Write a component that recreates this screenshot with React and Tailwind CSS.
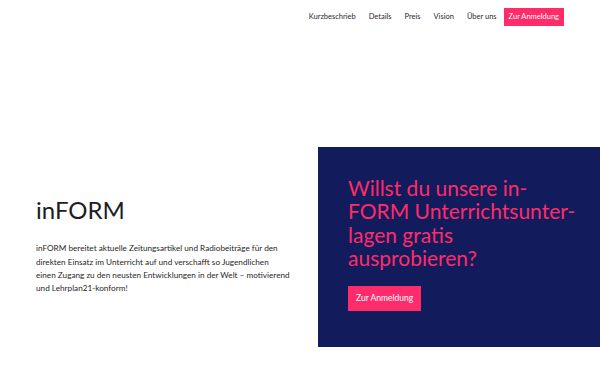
const navItems = ["Kurzbeschrieb", "Details", "Preis", "Vision", "Über uns"];

const App = () => {
  return (
    <div className="w-[600px] h-[375px] overflow-hidden bg-white font-['Lato',sans-serif] text-[#1d1d1f]">
      {/* Top navigation */}
      <nav className="flex items-center justify-end gap-[13px] pt-[8px] pr-[36px] h-[18px] box-content">
        {navItems.map((item) => (
          <a key={item} href="#" className="text-[7.5px] text-[#2a2a2a]">
            {item}
          </a>
        ))}
        <a
          href="#"
          className="flex items-center h-[18px] -ml-[6px] px-[5px] text-[7.5px] text-white bg-[#ff2b6a]"
        >
          Zur Anmeldung
        </a>
      </nav>

      {/* Hero */}
      <main className="flex items-center mt-[121px]">
        <div className="w-[318px] pl-[36px]">
          <h1 className="text-[24px] leading-none text-[#1d1d1f]">inFORM</h1>
          <p className="mt-[20px] text-[8.2px] leading-[13.3px] whitespace-nowrap text-[#1f1f1f]">
            inFORM bereitet aktuelle Zeitungsartikel und Radiobeiträge für den
            <br />
            direkten Einsatz im Unterricht auf und verschafft so Jugendlichen
            <br />
            einen Zugang zu den neusten Entwicklungen in der Welt – motivierend
            <br />
            und Lehrplan21-konform!
          </p>
        </div>

        <section className="flex-1 h-[200px] bg-[#121b5b] pl-[30px] pt-[29px] box-border">
          <h2 className="text-[21px] leading-[23.4px] text-[#ff2b6a] whitespace-nowrap">
            Willst du unsere in-
            <br />
            FORM Unterrichtsunter-
            <br />
            lagen gratis
            <br />
            ausprobieren?
          </h2>
          <a
            href="#"
            className="inline-flex items-center mt-[16px] h-[25px] px-[8px] text-[8.5px] text-white bg-[#ff2b6a]"
          >
            Zur Anmeldung
          </a>
        </section>
      </main>
    </div>
  );
};

export default App;
